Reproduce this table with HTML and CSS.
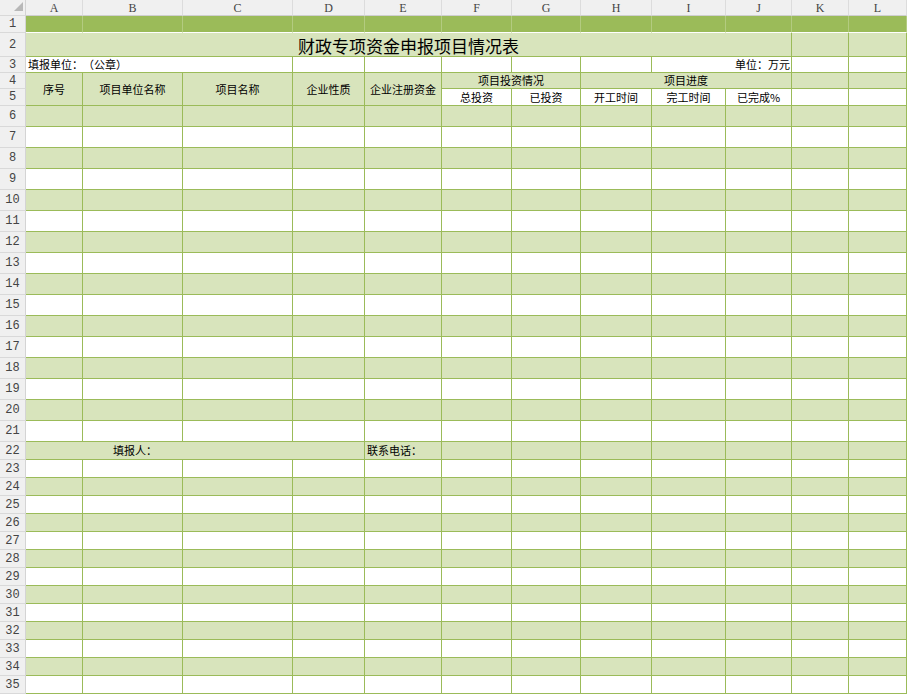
FILE: index.html
```html
<!DOCTYPE html>
<html lang="zh-CN">
<head>
<meta charset="utf-8">
<title>财政专项资金申报项目情况表</title>
<link rel="stylesheet" href="styles.css">
</head>
<body>
<table class="sheet">
<colgroup>
<col class="c-hd"><col class="c-a"><col class="c-b"><col class="c-c"><col class="c-d"><col class="c-e"><col class="c-f"><col class="c-g"><col class="c-h"><col class="c-i"><col class="c-j"><col class="c-k"><col class="c-l">
</colgroup>
<thead>
<tr class="r-colhd">
<th class="corner"><svg class="tri" width="10" height="10" viewBox="0 0 10 10"><polygon points="0,9 9,9 9,0" fill="#b8b8b8"/></svg></th>
<th class="colhd">A</th><th class="colhd">B</th><th class="colhd">C</th><th class="colhd">D</th><th class="colhd">E</th><th class="colhd">F</th><th class="colhd">G</th><th class="colhd">H</th><th class="colhd">I</th><th class="colhd">J</th><th class="colhd">K</th><th class="colhd">L</th>
</tr>
</thead>
<tbody>
<tr class="r1"><th>1</th><td></td><td></td><td></td><td></td><td></td><td></td><td></td><td></td><td></td><td></td><td></td><td></td></tr>
<tr class="r2 g"><th>2</th><td colspan="10" class="title">财政专项资金申报项目情况表</td><td></td><td></td></tr>
<tr class="r3"><th>3</th><td colspan="3" class="left">填报单位：（公章）</td><td></td><td></td><td></td><td></td><td></td><td colspan="2" class="right">单位：万元</td><td></td><td></td></tr>
<tr class="r4"><th>4</th><td rowspan="2" class="g ctr">序号</td><td rowspan="2" class="g ctr">项目单位名称</td><td rowspan="2" class="g ctr">项目名称</td><td rowspan="2" class="g ctr">企业性质</td><td rowspan="2" class="g ctr">企业注册资金</td><td colspan="2" class="g ctr">项目投资情况</td><td colspan="3" class="g ctr">项目进度</td><td class="g"></td><td class="g"></td></tr>
<tr class="r5"><th>5</th><td class="ctr">总投资</td><td class="ctr">已投资</td><td class="ctr">开工时间</td><td class="ctr">完工时间</td><td class="ctr">已完成%</td><td></td><td></td></tr>
<tr class="rb g"><th>6</th><td></td><td></td><td></td><td></td><td></td><td></td><td></td><td></td><td></td><td></td><td></td><td></td></tr>
<tr class="rb"><th>7</th><td></td><td></td><td></td><td></td><td></td><td></td><td></td><td></td><td></td><td></td><td></td><td></td></tr>
<tr class="rb g"><th>8</th><td></td><td></td><td></td><td></td><td></td><td></td><td></td><td></td><td></td><td></td><td></td><td></td></tr>
<tr class="rb"><th>9</th><td></td><td></td><td></td><td></td><td></td><td></td><td></td><td></td><td></td><td></td><td></td><td></td></tr>
<tr class="rb g"><th>10</th><td></td><td></td><td></td><td></td><td></td><td></td><td></td><td></td><td></td><td></td><td></td><td></td></tr>
<tr class="rb"><th>11</th><td></td><td></td><td></td><td></td><td></td><td></td><td></td><td></td><td></td><td></td><td></td><td></td></tr>
<tr class="rb g"><th>12</th><td></td><td></td><td></td><td></td><td></td><td></td><td></td><td></td><td></td><td></td><td></td><td></td></tr>
<tr class="rb"><th>13</th><td></td><td></td><td></td><td></td><td></td><td></td><td></td><td></td><td></td><td></td><td></td><td></td></tr>
<tr class="rb g"><th>14</th><td></td><td></td><td></td><td></td><td></td><td></td><td></td><td></td><td></td><td></td><td></td><td></td></tr>
<tr class="rb"><th>15</th><td></td><td></td><td></td><td></td><td></td><td></td><td></td><td></td><td></td><td></td><td></td><td></td></tr>
<tr class="rb g"><th>16</th><td></td><td></td><td></td><td></td><td></td><td></td><td></td><td></td><td></td><td></td><td></td><td></td></tr>
<tr class="rb"><th>17</th><td></td><td></td><td></td><td></td><td></td><td></td><td></td><td></td><td></td><td></td><td></td><td></td></tr>
<tr class="rb g"><th>18</th><td></td><td></td><td></td><td></td><td></td><td></td><td></td><td></td><td></td><td></td><td></td><td></td></tr>
<tr class="rb"><th>19</th><td></td><td></td><td></td><td></td><td></td><td></td><td></td><td></td><td></td><td></td><td></td><td></td></tr>
<tr class="rb g"><th>20</th><td></td><td></td><td></td><td></td><td></td><td></td><td></td><td></td><td></td><td></td><td></td><td></td></tr>
<tr class="rb"><th>21</th><td></td><td></td><td></td><td></td><td></td><td></td><td></td><td></td><td></td><td></td><td></td><td></td></tr>
<tr class="rs g"><th>22</th><td colspan="4" class="signer">填报人：</td><td class="left">联系电话：</td><td></td><td></td><td></td><td></td><td></td><td></td><td></td></tr>
<tr class="rs"><th>23</th><td></td><td></td><td></td><td></td><td></td><td></td><td></td><td></td><td></td><td></td><td></td><td></td></tr>
<tr class="rs g"><th>24</th><td></td><td></td><td></td><td></td><td></td><td></td><td></td><td></td><td></td><td></td><td></td><td></td></tr>
<tr class="rs"><th>25</th><td></td><td></td><td></td><td></td><td></td><td></td><td></td><td></td><td></td><td></td><td></td><td></td></tr>
<tr class="rs g"><th>26</th><td></td><td></td><td></td><td></td><td></td><td></td><td></td><td></td><td></td><td></td><td></td><td></td></tr>
<tr class="rs"><th>27</th><td></td><td></td><td></td><td></td><td></td><td></td><td></td><td></td><td></td><td></td><td></td><td></td></tr>
<tr class="rs g"><th>28</th><td></td><td></td><td></td><td></td><td></td><td></td><td></td><td></td><td></td><td></td><td></td><td></td></tr>
<tr class="rs"><th>29</th><td></td><td></td><td></td><td></td><td></td><td></td><td></td><td></td><td></td><td></td><td></td><td></td></tr>
<tr class="rs g"><th>30</th><td></td><td></td><td></td><td></td><td></td><td></td><td></td><td></td><td></td><td></td><td></td><td></td></tr>
<tr class="rs"><th>31</th><td></td><td></td><td></td><td></td><td></td><td></td><td></td><td></td><td></td><td></td><td></td><td></td></tr>
<tr class="rs g"><th>32</th><td></td><td></td><td></td><td></td><td></td><td></td><td></td><td></td><td></td><td></td><td></td><td></td></tr>
<tr class="rs"><th>33</th><td></td><td></td><td></td><td></td><td></td><td></td><td></td><td></td><td></td><td></td><td></td><td></td></tr>
<tr class="rs g"><th>34</th><td></td><td></td><td></td><td></td><td></td><td></td><td></td><td></td><td></td><td></td><td></td><td></td></tr>
<tr class="rs"><th>35</th><td></td><td></td><td></td><td></td><td></td><td></td><td></td><td></td><td></td><td></td><td></td><td></td></tr>
</tbody>
</table>
</body>
</html>
```

FILE: styles.css
```css
html, body {
  margin: 0;
  padding: 0;
  background: #ffffff;
}
body {
  width: 907px;
  height: 694px;
  overflow: hidden;
}
.sheet {
  border-collapse: separate;
  border-spacing: 0;
  table-layout: fixed;
  width: 907px;
  font-family: "Noto Sans CJK SC", "Noto Sans", sans-serif;
  font-size: 11px;
  color: #000;
  text-spacing-trim: space-all;
}
.c-hd { width: 26px; }
.c-a { width: 57px; }
.c-b { width: 100px; }
.c-c { width: 110px; }
.c-d { width: 72px; }
.c-e { width: 77px; }
.c-f { width: 70px; }
.c-g { width: 69px; }
.c-h { width: 71px; }
.c-i { width: 74px; }
.c-j { width: 66px; }
.c-k { width: 57px; }
.c-l { width: 58px; }

.sheet td {
  padding: 0;
  border-right: 1px solid #9bbb59;
  border-bottom: 1px solid #9bbb59;
  white-space: nowrap;
  overflow: hidden;
  vertical-align: middle;
  line-height: 1;
}
.sheet th {
  padding: 0;
  background: #f0f0f0;
  border-right: 1px solid #d4d4d4;
  border-bottom: 1px solid #d9d9d9;
  font-family: "Liberation Mono", "DejaVu Sans Mono", monospace;
  font-weight: normal;
  font-size: 12px;
  color: #444;
  text-align: center;
  vertical-align: middle;
  line-height: 1;
}
.sheet thead th.colhd {
  font-family: "Liberation Serif", serif;
  font-size: 12px;
  border-right: 1px solid #dcdcdc;
  border-bottom: 1px solid #cfcfcf;
  padding-top: 1px;
}
.corner {
  text-align: right;
  vertical-align: bottom;
}
.tri {
  display: block;
  margin: 0 1px 1px auto;
}
.r-colhd { height: 16px; }
.r1 { height: 17px; }
.r1 td {
  background: #9bbb59;
  border-right: 1px solid #b3cb80;
  border-bottom: 1px solid #ffffff;
}
.r2 { height: 24px; }
.r3 { height: 16px; }
.r4 { height: 16px; }
.r5 { height: 17px; }
.rb { height: 21px; }
.rs { height: 18px; }

.g td, td.g {
  background: #d8e4bc;
}
.title {
  font-size: 17px;
  text-align: center;
  padding-top: 2px !important;
}
.left {
  text-align: left;
  padding-left: 2px !important;
}
.right {
  text-align: right;
  padding-right: 1px !important;
}
.ctr {
  text-align: center;
}
.signer {
  text-align: left;
  padding-left: 87px !important;
}
```
